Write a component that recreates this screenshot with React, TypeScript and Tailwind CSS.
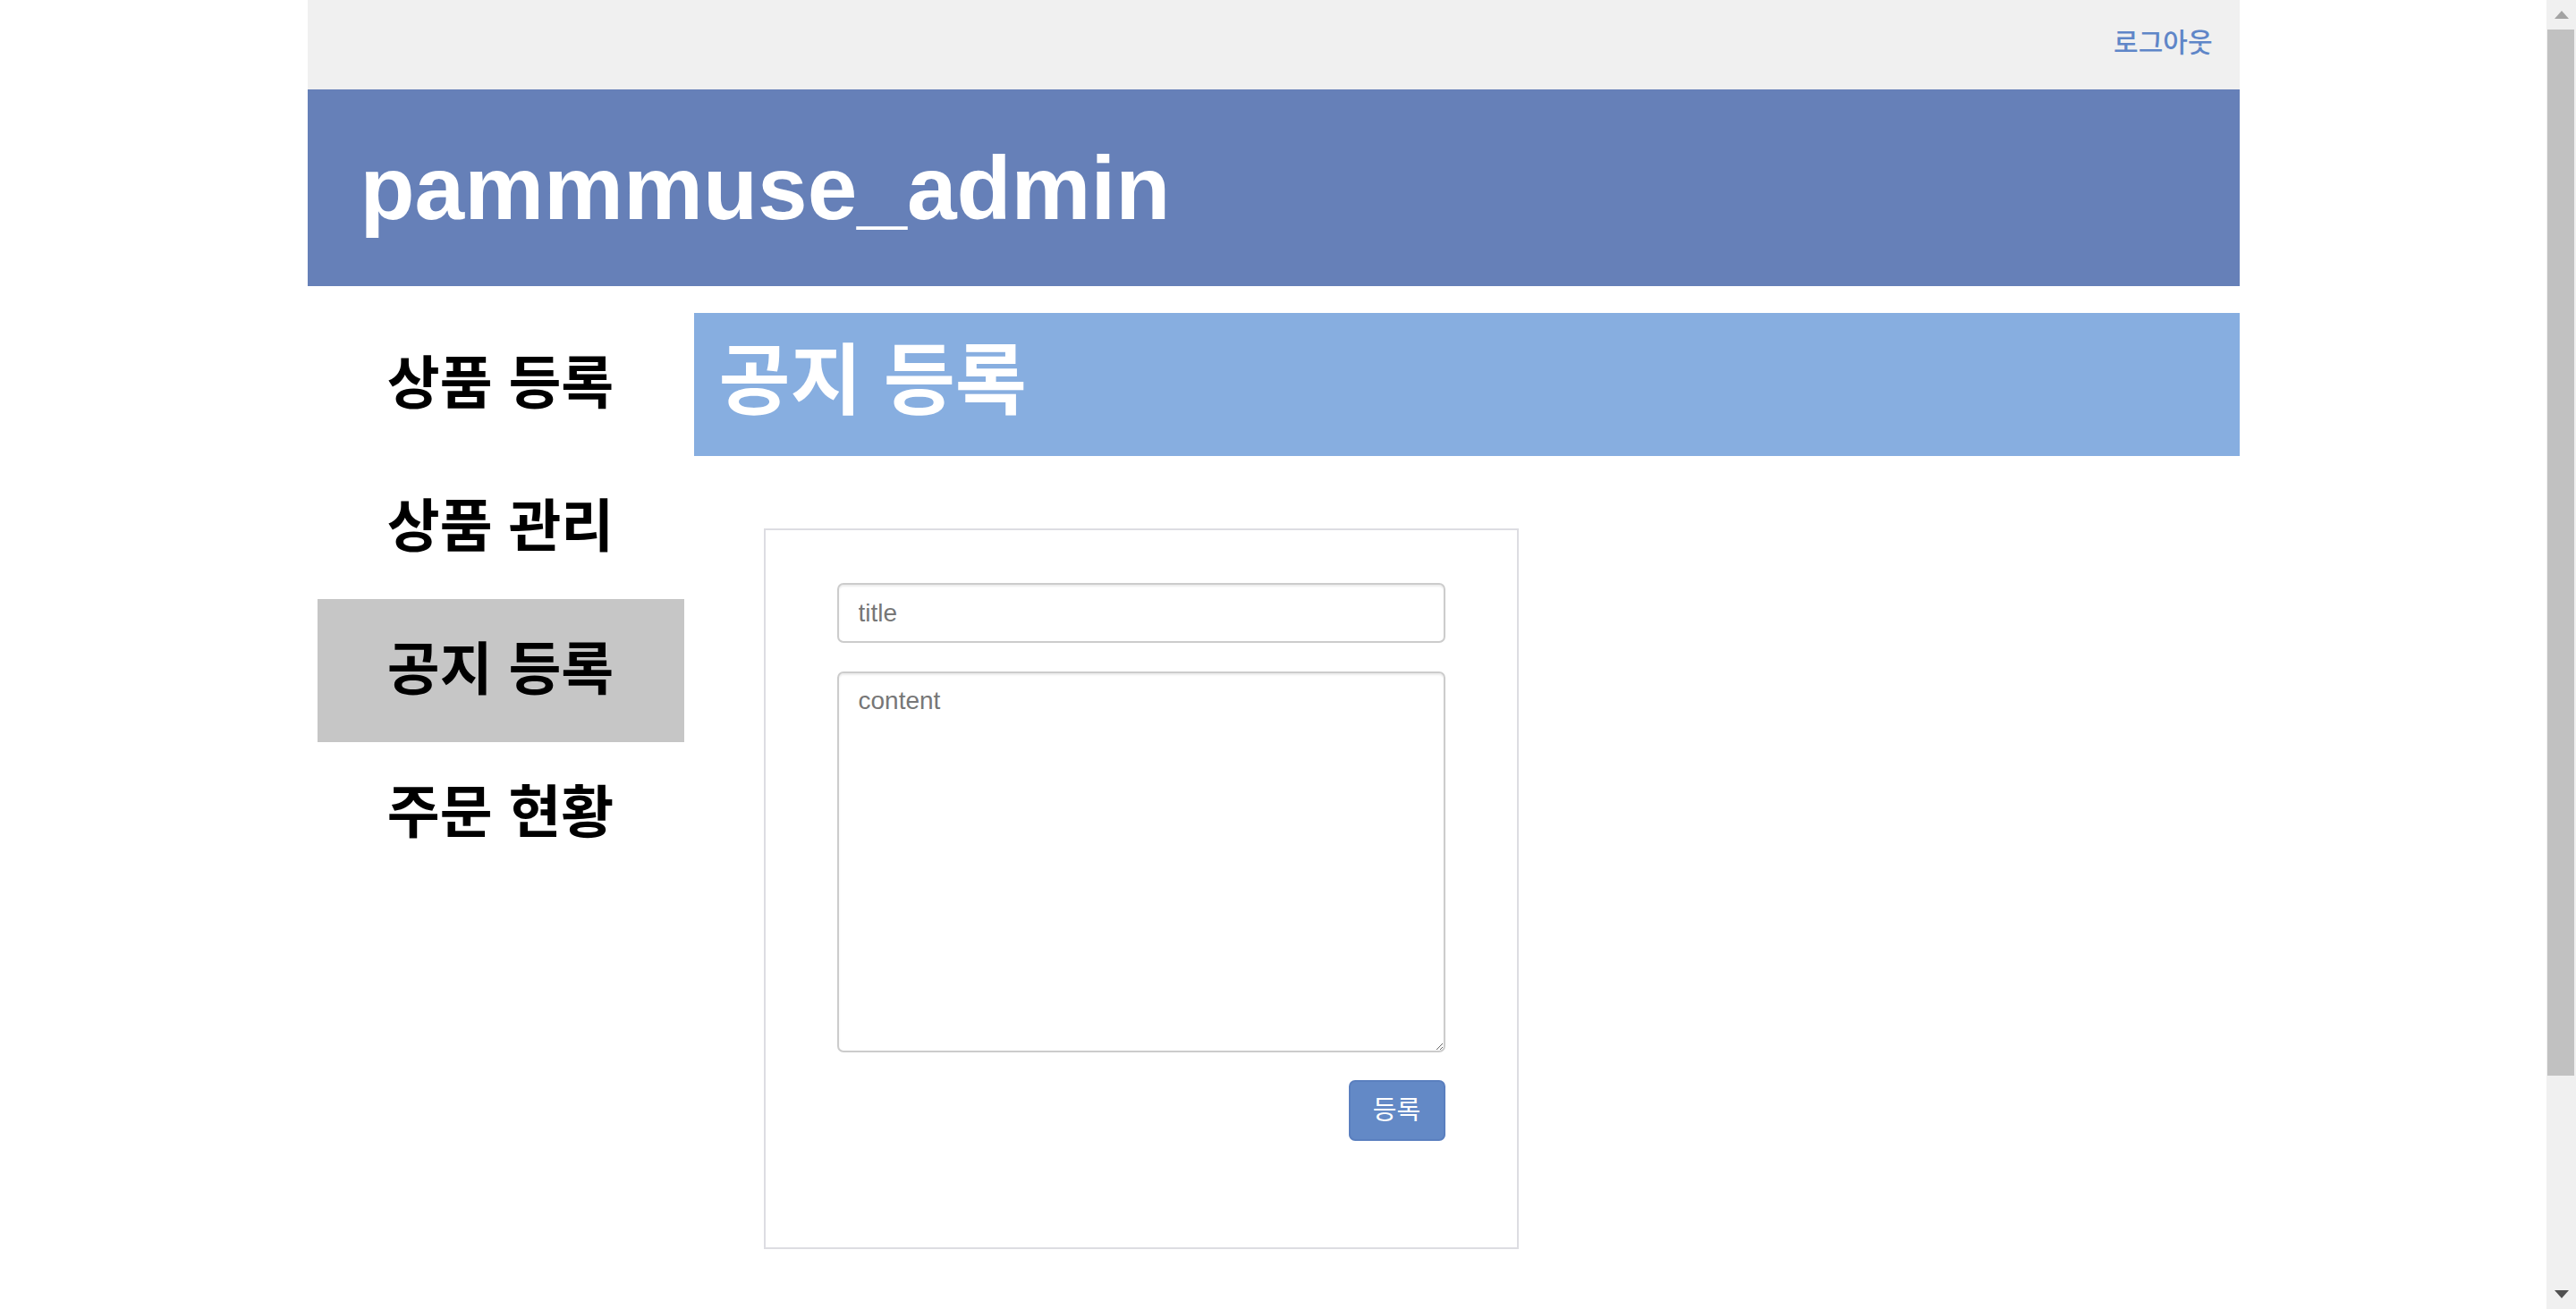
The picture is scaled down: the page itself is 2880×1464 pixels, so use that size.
const menu = [
  { label: "상품 등록", active: false },
  { label: "상품 관리", active: false },
  { label: "공지 등록", active: true },
  { label: "주문 현황", active: false },
];

function ScrollBar() {
  return (
    <div className="flex w-[33px] shrink-0 flex-col bg-[#f0f0f0]">
      <div className="flex h-[33px] items-center justify-center">
        <svg width="16" height="9" viewBox="0 0 16 9">
          <path d="M8 0 L16 9 L0 9 Z" fill="#a3a3a3" />
        </svg>
      </div>
      <div className="ml-[1px] mr-[2px] h-[1170px] bg-[#c1c1c1]" />
      <div className="flex-1" />
      <div className="flex h-[33px] items-center justify-center">
        <svg width="16" height="9" viewBox="0 0 16 9">
          <path d="M0 0 L16 0 L8 9 Z" fill="#505050" />
        </svg>
      </div>
    </div>
  );
}

export default function App() {
  return (
    <div
      className="flex h-screen w-full overflow-hidden bg-white"
      style={{ fontFamily: '"Liberation Sans", "Noto Sans CJK KR", sans-serif' }}
    >
      <div className="min-w-0 flex-1">
        <div className="mx-auto w-[2160px]">
          {/* Top bar */}
          <div className="flex h-[100px] items-center justify-end bg-[#f0f0f0] pb-[4px] pr-[30px]">
            <a className="cursor-pointer text-[30px] font-medium leading-none text-[#5f86c8]">로그아웃</a>
          </div>

          {/* Header */}
          <header className="flex h-[220px] items-center bg-[#6680b8] pl-[59px]">
            <h1 className="text-[100px] font-bold leading-none text-white">pammmuse_admin</h1>
          </header>

          <div className="flex pt-[30px]">
            {/* Sidebar */}
            <nav className="w-[432px] shrink-0 px-[11px]">
              {menu.map((item) => (
                <div
                  key={item.label}
                  className={`flex h-[160px] cursor-pointer items-center justify-center pb-[2px] text-[64px] font-bold leading-none text-black ${
                    item.active ? "bg-[#c6c6c6]" : ""
                  }`}
                >
                  {item.label}
                </div>
              ))}
            </nav>

            {/* Content */}
            <main className="w-[1728px]">
              <div className="flex h-[160px] items-center bg-[#87aee0] pb-[8px] pl-[28px]">
                <h2 className="text-[87px] font-bold leading-none text-white">공지 등록</h2>
              </div>

              <div className="ml-[78px] mt-[81px] h-[806px] w-[844px] border-2 border-[#dddde2] px-[80px] pt-[59px]">
                <input
                  type="text"
                  placeholder="title"
                  className="block h-[67px] w-full rounded-[7px] border-2 border-[#cccccc] px-[22px] text-[28px] text-[#555] shadow-[inset_0_2px_2px_rgba(0,0,0,0.075)] outline-none placeholder:text-[#777]"
                />
                <textarea
                  placeholder="content"
                  className="mt-[32px] block h-[426px] w-full rounded-[7px] border-2 border-[#cccccc] px-[22px] pt-[11px] text-[28px] leading-[1.43] text-[#555] shadow-[inset_0_2px_2px_rgba(0,0,0,0.075)] outline-none placeholder:text-[#777]"
                />
                <div className="mt-[31px] flex justify-end">
                  <button className="flex h-[68px] w-[108px] items-center justify-center rounded-[7px] border-2 border-[#5a7fbf] bg-[#6389c6] text-[29px] leading-none text-white">
                    등록
                  </button>
                </div>
              </div>
            </main>
          </div>
        </div>
      </div>
      <ScrollBar />
    </div>
  );
}
